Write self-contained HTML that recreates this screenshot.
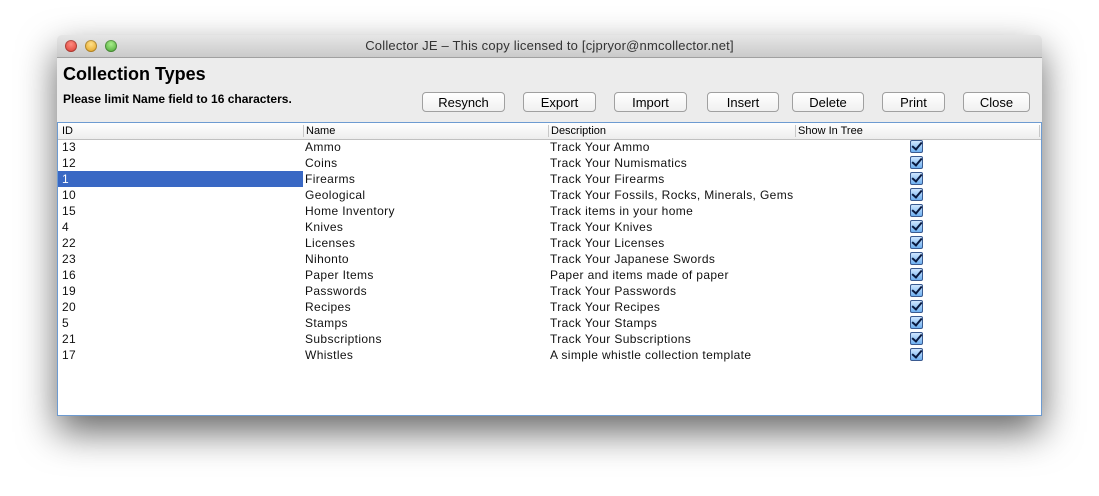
<!DOCTYPE html>
<html><head><style>
body{margin:0;width:1099px;height:496px;background:#fff;position:relative;overflow:hidden;font-family:"Liberation Sans",sans-serif}
.win{position:absolute;left:57px;top:35px;width:985px;height:381px;background:#ececec;box-shadow:0 16px 38px rgba(0,0,0,.6);border-radius:5px 5px 0 0}
.tb{position:absolute;left:0;top:0;width:985px;height:22px;background:linear-gradient(#e6e6e6,#cacaca);border-radius:5px 5px 0 0;border-bottom:1px solid #a0a0a0;text-align:center;font-size:13px;line-height:22px;color:#333;letter-spacing:0.2px}
.dot{position:absolute;top:5px;width:12px;height:12px;border-radius:50%;box-shadow:inset 0 0 0 1px rgba(0,0,0,.25)}
h1{position:absolute;left:6px;top:29px;margin:0;font-size:18px;font-weight:bold}
.note{position:absolute;left:6px;top:57px;font-size:12px;font-weight:bold}
.btn{position:absolute;top:57px;height:20px;border:1px solid #a0a0a0;border-radius:4px;background:linear-gradient(#fff,#f0f0f0);font-size:13px;text-align:center;line-height:20px;box-sizing:border-box}
.tbl{position:absolute;left:0;top:87px;width:985px;height:294px;background:#fff;border:1px solid #6d9bd1;box-sizing:border-box}
.hd{position:absolute;left:0;top:0;width:983px;height:16px;background:linear-gradient(#fff,#ededed);border-bottom:1px solid #c0c0c0;font-size:11px;line-height:16px}
.hd span,.r span{position:absolute}
.sep{position:absolute;top:2px;width:1px;height:12px;background:#c8c8c8}
.r{position:absolute;left:0;width:983px;height:16px;font-size:12px;line-height:16px;color:#111;letter-spacing:0.37px}
.cb{position:absolute;left:852px;top:1px;width:11px;height:11px;border:1px solid #3a5a90;border-radius:2px;background:linear-gradient(#cfe6ff,#6fb0f0)}
.cb:after{content:"";position:absolute;left:3px;top:-1px;width:4px;height:8px;border:solid #0a1a40;border-width:0 2px 2px 0;transform:rotate(40deg)}
</style></head><body>
<div class="win">
<div class="tb">Collector JE – This copy licensed to [cjpryor@nmcollector.net]
<div class="dot" style="left:8px;background:radial-gradient(circle at 50% 35%,#ff8a80,#d8342a)"></div><div class="dot" style="left:28px;background:radial-gradient(circle at 50% 35%,#ffe08a,#e09a10)"></div><div class="dot" style="left:48px;background:radial-gradient(circle at 50% 35%,#a8ee8a,#3f9e2a)"></div></div>
<h1>Collection Types</h1>
<div class="note">Please limit Name field to 16 characters.</div>
<div class="btn" style="left:365px;width:83px">Resynch</div>
<div class="btn" style="left:466px;width:73px">Export</div>
<div class="btn" style="left:557px;width:73px">Import</div>
<div class="btn" style="left:650px;width:72px">Insert</div>
<div class="btn" style="left:735px;width:72px">Delete</div>
<div class="btn" style="left:825px;width:63px">Print</div>
<div class="btn" style="left:906px;width:67px">Close</div>
<div class="tbl">
<div class="hd"><span style="left:4px">ID</span><div class="sep" style="left:245px"></div><span style="left:248px">Name</span><div class="sep" style="left:490px"></div><span style="left:493px">Description</span><div class="sep" style="left:737px"></div><span style="left:740px">Show In Tree</span><div class="sep" style="left:981px"></div></div>
<div class="r" style="top:16px"><span style="left:4px">13</span><span style="left:247px">Ammo</span><span style="left:492px">Track Your Ammo</span><div class="cb"></div></div>
<div class="r" style="top:32px"><span style="left:4px">12</span><span style="left:247px">Coins</span><span style="left:492px">Track Your Numismatics</span><div class="cb"></div></div>
<div class="r" style="top:48px"><span style="left:0;width:245px;height:16px;background:#3968c4;color:#fff;padding-left:4px;box-sizing:border-box">1</span><span style="left:247px">Firearms</span><span style="left:492px">Track Your Firearms</span><div class="cb"></div></div>
<div class="r" style="top:64px"><span style="left:4px">10</span><span style="left:247px">Geological</span><span style="left:492px">Track Your Fossils, Rocks, Minerals, Gems</span><div class="cb"></div></div>
<div class="r" style="top:80px"><span style="left:4px">15</span><span style="left:247px">Home Inventory</span><span style="left:492px">Track items in your home</span><div class="cb"></div></div>
<div class="r" style="top:96px"><span style="left:4px">4</span><span style="left:247px">Knives</span><span style="left:492px">Track Your Knives</span><div class="cb"></div></div>
<div class="r" style="top:112px"><span style="left:4px">22</span><span style="left:247px">Licenses</span><span style="left:492px">Track Your Licenses</span><div class="cb"></div></div>
<div class="r" style="top:128px"><span style="left:4px">23</span><span style="left:247px">Nihonto</span><span style="left:492px">Track Your Japanese Swords</span><div class="cb"></div></div>
<div class="r" style="top:144px"><span style="left:4px">16</span><span style="left:247px">Paper Items</span><span style="left:492px">Paper and items made of paper</span><div class="cb"></div></div>
<div class="r" style="top:160px"><span style="left:4px">19</span><span style="left:247px">Passwords</span><span style="left:492px">Track Your Passwords</span><div class="cb"></div></div>
<div class="r" style="top:176px"><span style="left:4px">20</span><span style="left:247px">Recipes</span><span style="left:492px">Track Your Recipes</span><div class="cb"></div></div>
<div class="r" style="top:192px"><span style="left:4px">5</span><span style="left:247px">Stamps</span><span style="left:492px">Track Your Stamps</span><div class="cb"></div></div>
<div class="r" style="top:208px"><span style="left:4px">21</span><span style="left:247px">Subscriptions</span><span style="left:492px">Track Your Subscriptions</span><div class="cb"></div></div>
<div class="r" style="top:224px"><span style="left:4px">17</span><span style="left:247px">Whistles</span><span style="left:492px">A simple whistle collection template</span><div class="cb"></div></div>
</div>
</div>
</body></html>
